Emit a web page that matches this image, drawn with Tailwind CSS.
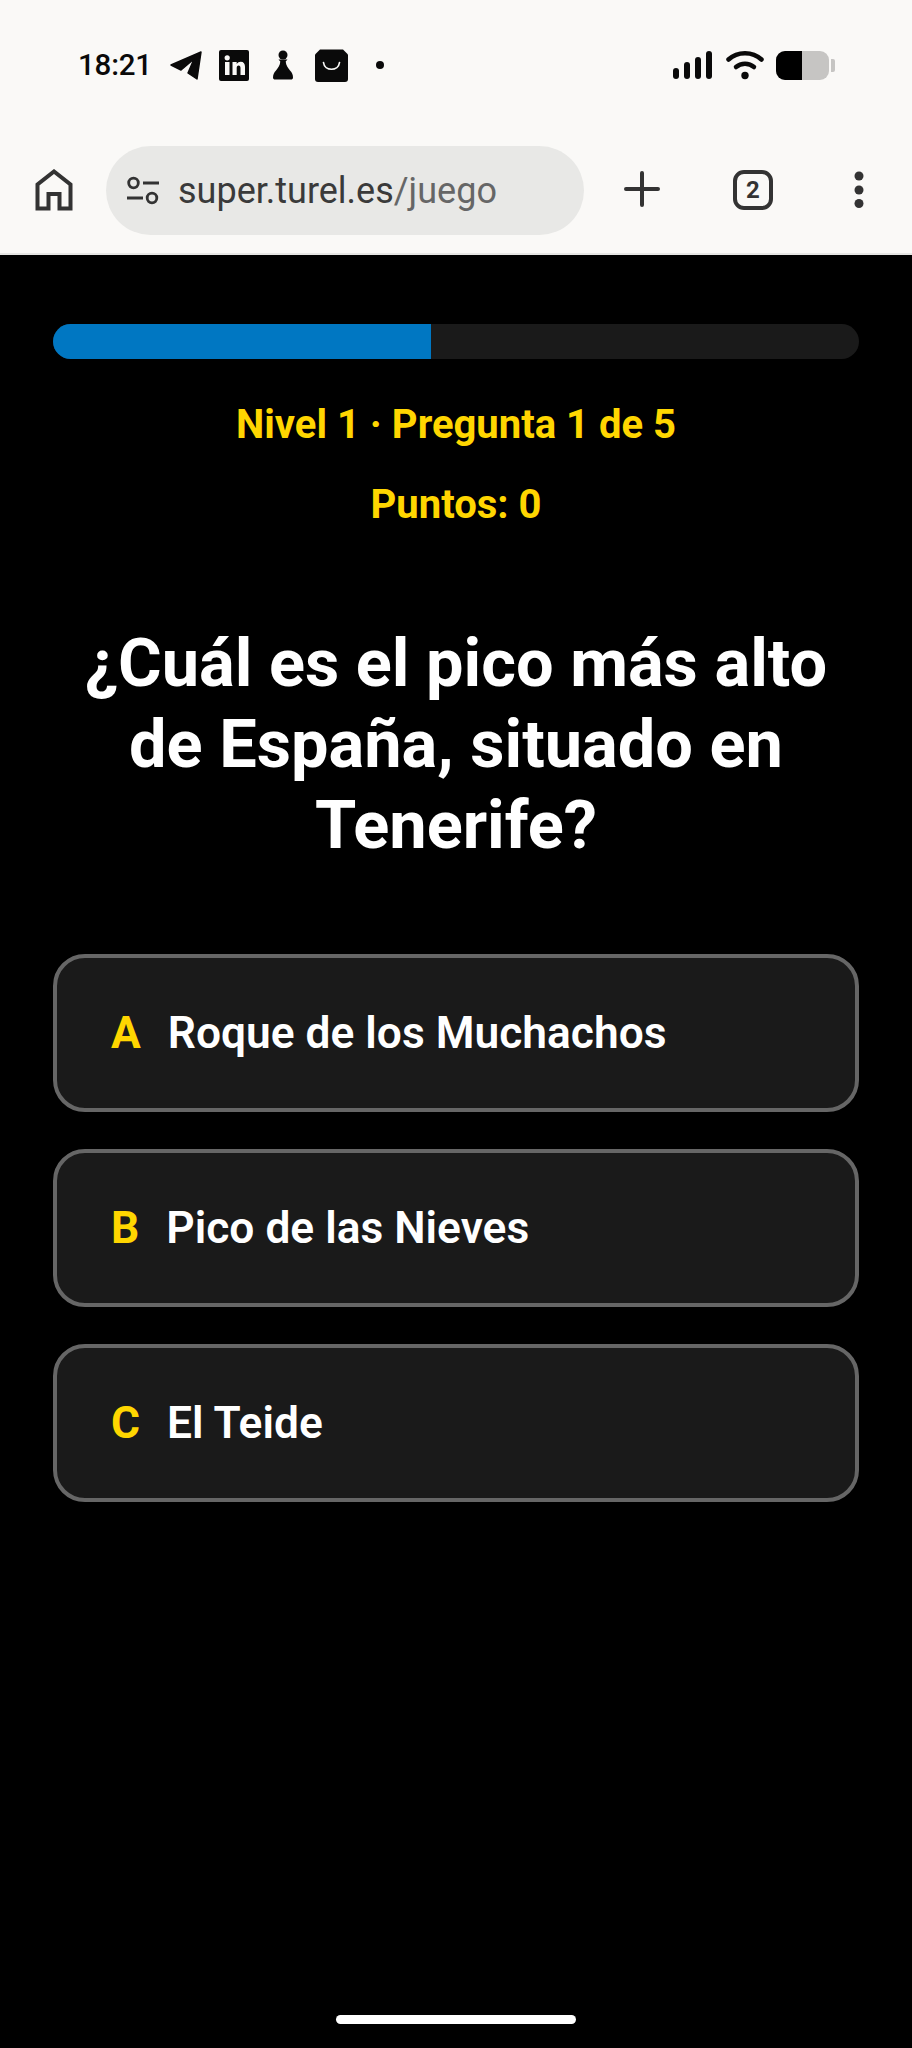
<!DOCTYPE html>
<html lang="es">
<head>
<meta charset="utf-8">
<script src="https://cdn.jsdelivr.net/npm/@tailwindcss/browser@4"></script>
<title>Quiz</title>
</head>
<body class="m-0 bg-black font-['Roboto',sans-serif]">
<div class="relative w-[912px] h-[2048px] bg-black overflow-hidden flex flex-col">
  <header class="h-[255px] shrink-0 bg-[#faf9f7] border-b-[2px] border-[#e6e6e4] flex flex-col">
    <div class="h-[130px] pt-[46px] pl-[78px] pr-[77px] flex items-start justify-between shrink-0">
      <div class="flex items-center h-[38px] text-[#0a0a0a]">
        <span class="text-[29.500px] font-medium tracking-[-0.2px] leading-[38px] w-[80px]">18:21</span>
        <svg class="ml-[12px]" width="32" height="30" viewBox="0 0 32 30"><path d="M1 15 L31 2 L27 29 L18 23 L24 9 L11 20 Z" fill="#0a0a0a" stroke="#0a0a0a" stroke-width="1.5" stroke-linejoin="round"/></svg>
        <svg class="ml-[17px]" width="30" height="31" viewBox="0 0 30 31"><rect width="30" height="31" rx="2" fill="#0a0a0a"/><rect x="6" y="12" width="4.5" height="13" fill="#faf9f7"/><circle cx="8.2" cy="7.8" r="2.6" fill="#faf9f7"/><path d="M13.5 12h4.2v2c1-1.5 2.400-2.300 4-2.300 3 0 4.300 2 4.300 5V25h-4.500v-7c0-1.700-.6-2.600-1.900-2.600s-1.900 1-1.900 2.600V25h-4.200Z" fill="#faf9f7"/></svg>
        <svg class="ml-[24px]" width="20" height="30" viewBox="0 0 20 30"><circle cx="10" cy="5" r="4.500" fill="#0a0a0a"/><path d="M5.500 9.500h9l-1.800 2c.3 4 2.300 6.500 4.300 9 2 2 3 4 3 7 0 1.500-1 2-2 2H2c-1 0-2-.5-2-2 0-3 1-5 3-7 2-2.500 4-5 4.300-9Z" fill="#0a0a0a"/></svg>
        <svg class="ml-[22px]" width="33" height="33" viewBox="0 0 33 33"><path d="M5 0.500h23l5 5V30a3 3 0 0 1-3 3H3a3 3 0 0 1-3-3V5.500Z" fill="#0a0a0a"/><path d="M8.500 13.500c1 9 15 9 16 0" fill="none" stroke="#faf9f7" stroke-width="1.700" stroke-linecap="round"/></svg>
        <span class="ml-[28px] w-[8px] h-[8px] rounded-full bg-[#0a0a0a]"></span>
      </div>
      <div class="flex items-center h-[38px]">
        <svg width="40" height="28" viewBox="0 0 40 28"><g fill="#0a0a0a"><rect x="0" y="17" width="6" height="11" rx="3"/><rect x="11" y="11" width="6" height="17" rx="3"/><rect x="22" y="6" width="6" height="22" rx="3"/><rect x="33" y="0" width="6" height="28" rx="3"/></g></svg>
        <svg class="ml-[13px]" width="38" height="30" viewBox="0 0 38 30"><g fill="none" stroke="#0a0a0a" stroke-width="4.500" stroke-linecap="round"><path d="M2.500 9.500c9-8.500 24-8.500 33 0"/><path d="M10 17c5-4.500 13-4.500 18 0"/></g><circle cx="19" cy="25.500" r="3.700" fill="#0a0a0a"/></svg>
        <div class="ml-[12px] flex items-center">
          <div class="w-[53px] h-[29px] rounded-[9px] overflow-hidden bg-[#c6c5c3] flex"><div class="w-[26px] h-full bg-black"></div></div>
          <div class="ml-[2px] w-[4px] h-[13px] rounded-r-[2px] bg-[#c6c5c3]"></div>
        </div>
      </div>
    </div>
    <div class="flex-1 flex items-start relative">
      <svg class="absolute left-[35px] top-[39px]" width="38" height="42" viewBox="0 0 38 42"><path d="M2.500 39.500V15.500L19 2.500L35.500 15.500V39.500H24.500V25H13.500V39.500Z" fill="none" stroke="#333" stroke-width="4" stroke-linejoin="miter"/></svg>
      <div class="absolute left-[106px] top-[16px] w-[478px] h-[89px] rounded-full bg-[#e8e8e6] flex items-center">
        <svg class="ml-[20px]" width="34" height="30" viewBox="0 0 34 30"><g fill="none" stroke="#333" stroke-width="2.800"><circle cx="7.500" cy="7" r="4.800"/><circle cx="26" cy="22" r="4.800"/><path d="M17 7h16M1 22h16"/></g></svg>
        <span class="ml-[18px] text-[36px] leading-none text-[#3a3a3a] whitespace-nowrap">super.turel.es<span class="text-[#666]">/juego</span></span>
      </div>
      <svg class="absolute left-[623px] top-[40px]" width="38" height="38" viewBox="0 0 38 38"><path d="M19 3V35M3 19H35" stroke="#333" stroke-width="4" stroke-linecap="round"/></svg>
      <div class="absolute left-[733px] top-[40px] w-[40px] h-[40px] rounded-[11px] border-[4px] border-[#333] flex items-center justify-center text-[24px] font-bold text-[#333]">2</div>
      <svg class="absolute left-[849px] top-[41px]" width="20" height="38" viewBox="0 0 20 38"><g fill="#333"><circle cx="10" cy="5" r="4.500"/><circle cx="10" cy="19" r="4.500"/><circle cx="10" cy="32.500" r="4.500"/></g></svg>
    </div>
  </header>
  <main class="flex-1 px-[53px] pt-[69px]">
    <div class="w-[806px] h-[35px] rounded-full overflow-hidden bg-[#1a1a1a]"><div class="h-full w-[378px] bg-[#0077c2]"></div></div>
    <p class="mt-[41px] text-center text-[40px] leading-[50px] font-bold text-[#ffd600]">Nivel 1 · Pregunta 1 de 5</p>
    <p class="mt-[30px] text-center text-[40px] leading-[50px] font-bold text-[#ffd600]">Puntos: 0</p>
    <h1 class="mt-[93px] text-center text-[66.700px] leading-[81px] font-bold text-white">¿Cuál es el pico más alto<br>de España, situado en<br>Tenerife?</h1>
    <div class="mt-[88px] flex flex-col gap-[37px]">
      <div class="h-[158px] rounded-[32px] border-[4px] border-[#666] bg-[#1a1a1a] flex items-center pl-[54px] text-[44.300px] font-semibold text-white"><span class="text-[#ffd600] font-bold mr-[27px]">A</span>Roque de los Muchachos</div>
      <div class="h-[158px] rounded-[32px] border-[4px] border-[#666] bg-[#1a1a1a] flex items-center pl-[54px] text-[44.300px] font-semibold text-white"><span class="text-[#ffd600] font-bold mr-[27px]">B</span>Pico de las Nieves</div>
      <div class="h-[158px] rounded-[32px] border-[4px] border-[#666] bg-[#1a1a1a] flex items-center pl-[54px] text-[44.300px] font-semibold text-white"><span class="text-[#ffd600] font-bold mr-[27px]">C</span>El Teide</div>
    </div>
  </main>
  <div class="absolute left-[336px] bottom-[24px] w-[240px] h-[9px] rounded-full bg-white"></div>
</div>
</body>
</html>
